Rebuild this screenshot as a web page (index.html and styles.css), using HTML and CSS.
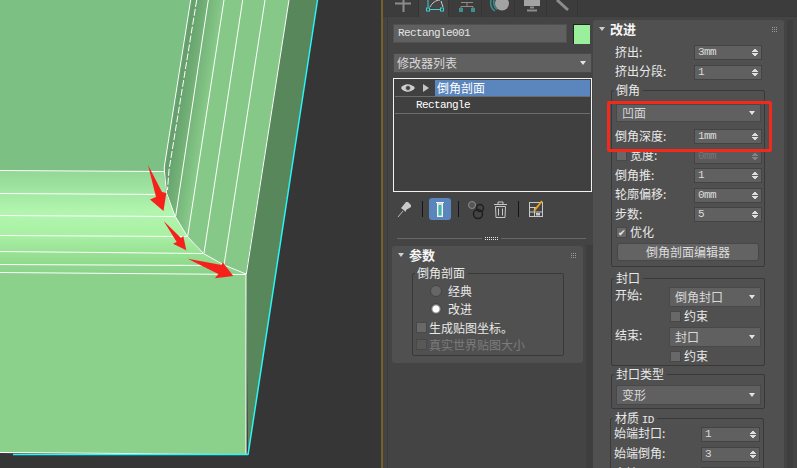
FILE: index.html
```html
<!DOCTYPE html>
<html lang="zh">
<head>
<meta charset="utf-8">
<title>倒角剖面</title>
<link rel="stylesheet" href="styles.css">
</head>
<body>
<svg class="view" width="381" height="468" viewBox="0 0 381 468">
  <defs>
    <linearGradient id="bands" gradientUnits="userSpaceOnUse" x1="0" y1="171" x2="0" y2="274">
      <stop offset="0" stop-color="#93d696"/>
      <stop offset=".22" stop-color="#a3e8a3"/>
      <stop offset=".4" stop-color="#b2f6ae"/>
      <stop offset=".62" stop-color="#a9f0a4"/>
      <stop offset=".82" stop-color="#96e092"/>
      <stop offset="1" stop-color="#8bd18b"/>
    </linearGradient>
    <linearGradient id="strip" gradientUnits="userSpaceOnUse" x1="168" y1="100" x2="206" y2="106">
      <stop offset="0" stop-color="#6fab74"/>
      <stop offset=".25" stop-color="#659f6b"/>
      <stop offset="1" stop-color="#85c887"/>
    </linearGradient>
  </defs>
  <rect width="381" height="468" fill="#363636"/>
  <polygon points="0,0 191,0 164,171 0,171" fill="#7dc084"/>
  <polygon points="191,0 289,0 246,274 224,265 203,253 187,236 175,216 166,193 164,171" fill="url(#strip)"/>
  <polygon points="289,0 317,0 248,455 246,274" fill="#57875a"/>
  <polygon points="0,171 164,171 166,193 175,216 187,236 203,253 224,265 246,274 0,274" fill="url(#bands)"/>
  <polygon points="0,273 246,274 246,454 0,453" fill="#8cd18b"/>
  <g class="edges">
    <path d="M190.7 0 164.3 167 164.5 172 166.5 193 175 216 187 236 203.5 253.5 224 265 246 274"/>
    <path d="M196.7 0 169 170 167.5 190" stroke-dasharray="7 2"/>
    <path d="M208.3 0 175.7 216"/>
    <path d="M224 0 187.7 236"/>
    <path d="M242.7 0 204 253"/>
    <path d="M265 0 224 265"/>
    <path d="M289 0 246.3 274"/>
    <path d="M0 170.5 164 171.5"/>
    <path d="M0 193.5 166 194.5"/>
    <path d="M0 215.5 175 216.5"/>
    <path d="M0 235.5 187 236.5"/>
    <path d="M0 251.5 203 253.5"/>
    <path d="M0 264.5 224 265.5"/>
    <path d="M0 272.5 246 274.5"/>
    <path d="M246 274V454"/>
    <path d="M0 452.5 246 454.5"/>
  </g>
  <path class="cyan" d="M317.5 0 248 455M13 454.5H248"/>
  <g class="arrows">
    <polygon points="148,165 162,192 166.3,193 163.5,211 150,199.5 156,197"/>
    <polygon points="163.7,221 181,238 183.3,236 186.3,250.3 173,243.7 176.7,242"/>
    <polygon points="187.7,258.7 221.7,265 222.7,262.3 233.3,276 215,278.3 218.3,274"/>
  </g>
</svg>
<div class="stripe"></div>
<main class="panel">
  <nav class="tabs">
    <div class="tab"><svg width="32" height="17"><path class="ic-grey" d="M16.500 0V12M8 3.500H24"/></svg></div>
    <div class="tab tab-active"><svg width="30" height="17"><path class="ic-cyan" d="M9 0V7.500M10.500 9.500H21.500"/><rect class="ic-cyan" x="7.500" y="8" width="3" height="3"/><rect class="ic-cyan" x="21.500" y="8" width="3" height="3"/><path class="ic-white" d="M11 7C13 3 17 0 21 0M22 1 24 7"/></svg></div>
    <div class="tab"><svg width="33" height="17"><path class="ic-thin" d="M12 2.500H24M18 2.500V6.500M12 8V6.500H24V8"/><rect class="ic-teal" x="10" y="8" width="4" height="4"/><rect class="ic-teal" x="22" y="8" width="4" height="4"/></svg></div>
    <div class="tab"><svg width="33" height="17"><circle class="fill-grey" cx="20" cy="3.500" r="7"/><path class="ic-arc" d="M9 0C8 5 10 9 13 11M12 0C11 4 13 8 15 9.500"/></svg></div>
    <div class="tab"><svg width="32" height="17"><rect class="fill-grey" x="9" y="0" width="16" height="6"/><path class="ic-grey" d="M15 7.500H19M12 10.500H22"/></svg></div>
    <div class="tab"><svg width="31" height="17"><path class="ic-wrench" d="M10 0 21 10"/></svg></div>
  </nav>
  <div class="cols">
    <section class="left">
      <div class="name-row">
        <div class="field name latin">Rectangle001</div>
        <div class="swatch"></div>
      </div>
      <div class="drop list-drop"><span>修改器列表</span><i class="caret"></i></div>
      <div class="stack">
        <div class="stack-row selected">
          <span class="stack-icons"><svg width="16" height="10" viewBox="0 0 16 10"><path class="eye" d="M1 5C4 0 11 0 15 5 11 10 4 10 1 5Z"/><circle class="pupil" cx="8" cy="5" r="2.500"/></svg><i class="play"></i></span>
          <span class="stack-name">倒角剖面</span>
        </div>
        <div class="stack-row"><span class="stack-name plain latin">Rectangle</span></div>
      </div>
      <div class="toolbar">
        <svg width="22" height="22"><path class="ic-pin" d="M5 19 10 13"/><path class="fill-light" d="M9 9 13 4 15 4 18 7 18 9 13 12 13 14 8 10Z"/></svg>
        <i class="sep"></i>
        <div class="tool-on"><svg width="22" height="22"><rect class="tube" x="8.500" y="4.500" width="5" height="14"/><rect class="tube-fill" x="9.500" y="7" width="3" height="10.500"/><path class="tube-top" d="M7 4.500H15"/></svg></div>
        <i class="sep"></i>
        <svg width="24" height="24"><circle class="ring-a" cx="7" cy="8" r="3.500"/><circle class="ring-b" cx="15" cy="11" r="3.500"/><circle class="ring-b" cx="13" cy="17" r="4.500"/></svg>
        <svg width="22" height="22"><path class="ic-can" d="M6.500 8.500H16.500L16 19.500H7ZM5 6.500H18M9 6V4H14V6M9.500 10.500V17.500M13.500 10.500V17.500"/></svg>
        <i class="sep"></i>
        <svg width="22" height="22"><rect class="ic-can" x="4.500" y="4.500" width="13" height="14"/><path class="ic-can" d="M4.500 9.500H12M4.500 14H17M9.500 9.500V18.500"/><rect class="fill-light" x="11" y="15" width="4" height="2.500"/><path class="pencil" d="M9 13 17 3"/></svg>
      </div>
      <div class="divider"><i></i><b></b><i></i></div>
      <div class="card params">
        <div class="card-title"><i class="caret title-caret"></i><strong>参数</strong><svg class="grip" width="5" height="5"><path d="M0 .500H5M0 2.500H5M0 4.500H5"/></svg></div>
        <fieldset class="group params-group">
          <legend>倒角剖面</legend>
          <label class="radio-row"><i class="radio"></i>经典</label>
          <label class="radio-row"><i class="radio on"></i>改进</label>
          <label class="check-row"><i class="check"></i>生成贴图坐标。</label>
          <label class="check-row off"><i class="check"></i>真实世界贴图大小</label>
        </fieldset>
      </div>
    </section>
    <section class="card right">
      <div class="card-title"><i class="caret title-caret"></i><strong>改进</strong><svg class="grip" width="5" height="5"><path d="M0 .500H5M0 2.500H5M0 4.500H5"/></svg></div>
      <div class="loose">
        <div class="row"><span class="lbl">挤出:</span><div class="spin latin">3mm<i class="arrows-ud"></i></div></div>
        <div class="row"><span class="lbl">挤出分段:</span><div class="spin latin">1<i class="arrows-ud"></i></div></div>
      </div>
      <fieldset class="group bevel">
        <legend>倒角</legend>
        <div class="drop"><span>凹面</span><i class="caret"></i></div>
        <div class="rows">
          <div class="row"><span class="lbl">倒角深度:</span><div class="spin latin">1mm<i class="arrows-ud"></i></div></div>
          <div class="row"><label class="lbl check-inline"><i class="check"></i>宽度:</label><div class="spin latin dim">0mm<i class="arrows-ud"></i></div></div>
          <div class="row"><span class="lbl">倒角推:</span><div class="spin latin">1<i class="arrows-ud"></i></div></div>
          <div class="row"><span class="lbl">轮廓偏移:</span><div class="spin latin">0mm<i class="arrows-ud"></i></div></div>
          <div class="row"><span class="lbl">步数:</span><div class="spin latin">5<i class="arrows-ud"></i></div></div>
        </div>
        <label class="opt"><i class="check ticked">✔</i>优化</label>
        <button class="btn" type="button">倒角剖面编辑器</button>
      </fieldset>
      <fieldset class="group cap">
        <legend>封口</legend>
        <div class="cap-row"><span class="lbl">开始:</span><div class="drop small"><span>倒角封口</span><i class="caret"></i></div></div>
        <label class="sub-check"><i class="check"></i>约束</label>
        <div class="cap-row"><span class="lbl">结束:</span><div class="drop small"><span>封口</span><i class="caret"></i></div></div>
        <label class="sub-check"><i class="check"></i>约束</label>
      </fieldset>
      <fieldset class="group cap-type">
        <legend>封口类型</legend>
        <div class="drop wide"><span>变形</span><i class="caret"></i></div>
      </fieldset>
      <fieldset class="group material">
        <legend>材质 <span class="latin">ID</span></legend>
        <div class="row"><span class="lbl">始端封口:</span><div class="spin short latin">1<i class="arrows-ud"></i></div></div>
        <div class="row"><span class="lbl">始端倒角:</span><div class="spin short latin">3<i class="arrows-ud"></i></div></div>
        <div class="row"><span class="lbl">末端:</span><div class="spin short latin">4<i class="arrows-ud"></i></div></div>
      </fieldset>
      <div class="callout"></div>
    </section>
    <div class="scroll"></div>
  </div>
</main>
</body>
</html>
```
FILE: styles.css
```css
* { box-sizing: border-box; }
html, body { height: 100%; }
body {
  margin: 0;
  width: 797px;
  height: 468px;
  overflow: hidden;
  display: flex;
  background: #363636;
  color: #e9e9e9;
  font: 12px/14px "Noto Sans CJK SC", sans-serif;
}
i { font-style: normal; display: block; }
.view { flex: none; display: block; }
.edges path { fill: none; stroke: #fff; stroke-width: 1; }
.cyan { fill: none; stroke: #2cf5f5; stroke-width: 1.5; }
.arrows polygon { fill: #f5211a; }
.stripe { flex: none; width: 2px; background: #76602a; }

.panel { flex: 1; min-width: 0; display: flex; flex-direction: column; background: #444; }
.tabs {
  flex: none;
  height: 17px;
  padding-left: 4px;
  display: grid;
  grid-template-columns: 32px 30px 33px 33px 32px 31px 1fr;
  background: #3c3c3c;
  border-bottom: 1px solid #3a3a3a;
}
.tab { height: 17px; border-right: 1px solid #353535; overflow: hidden; }
.tab svg { display: block; }
.tab-active { background: #444; }
.ic-grey { fill: none; stroke: #8c8c8c; stroke-width: 2; }
.ic-cyan { fill: none; stroke: #3cd0d0; stroke-width: 1; }
.ic-white { fill: none; stroke: #cfcfcf; stroke-width: 1; }
.ic-thin { fill: none; stroke: #8c8c8c; stroke-width: 1; }
.ic-teal { fill: #3d9090; }
.ic-arc { fill: none; stroke: #3d8f8f; stroke-width: 1.5; }
.ic-wrench { fill: none; stroke: #8c8c8c; stroke-width: 3; }
.fill-grey { fill: #a3a3a3; }
.fill-light { fill: #c8c8c8; }

.latin { font-family: "Liberation Mono", "Noto Sans CJK SC", monospace; font-size: 11px; letter-spacing: -.6px; }
.cols { flex: 1; min-height: 0; display: flex; overflow: hidden; }

.left {
  flex: none;
  width: 206px;
  margin-left: 4px;
  padding: 7px 0 0 5px;
  border-left: 1px solid #3b3b3b;
  background: linear-gradient(#3e3e3e, #3e3e3e) right 0 top 228px / 7px 100% no-repeat;
}
.name-row { display: flex; gap: 6px; width: 197px; }
.field { background: #606060; border: 1px solid #505050; }
.name { width: 174px; height: 19px; line-height: 17px; padding-left: 4px; color: #e4e4e4; }
.swatch { width: 17px; height: 20px; background: #9af09a; border: 1px solid #222; border-width: 1px 0 0 1px; }

.drop {
  display: flex;
  align-items: center;
  justify-content: space-between;
  height: 18px;
  padding: 0 5px;
  background: #606060;
  border: 1px solid #484848;
  color: #d8d8d8;
}
.list-drop { width: 199px; height: 20px; margin-top: 9px; padding: 0 3px; }
.list-drop .caret { margin-right: 2px; }
.caret {
  flex: none;
  width: 0;
  height: 0;
  border: 3px solid transparent;
  border-top: 4px solid #e4e4e4;
  border-bottom: 0;
  border-left-width: 3px;
}
.stack {
  width: 199px;
  height: 114px;
  margin-top: 5px;
  padding: 1px;
  background: #404040;
  border: 1px solid #f2f2f2;
}
.stack-row { display: flex; height: 17px; line-height: 15px; border-bottom: 1px solid #6c6c6c; }
.stack-icons { flex: none; width: 40px; display: flex; align-items: center; padding-left: 5px; gap: 7px; }
.stack-name { flex: 1; padding-left: 2px; color: #fff; }
.stack-name.plain { padding-left: 21px; line-height: 17px; }
.selected .stack-name { background: #5b86bd; font-size: 12px; }
.eye { fill: #d0d0d0; }
.pupil { fill: #404040; stroke: #d0d0d0; stroke-width: .7; }
.play { width: 0; height: 0; border: 4px solid transparent; border-left: 6px solid #c4c4c4; border-right: 0; }

.toolbar {
  height: 34px;
  display: grid;
  grid-template-columns: 22px 14px 22px 14px 24px 22px 14px 22px;
  align-items: center;
  width: 154px;
}
.toolbar svg { display: block; }
.sep { width: 1px; height: 16px; background: #161616; justify-self: center; }
.tool-on { width: 22px; height: 22px; border-radius: 3px; background: #5b86bd; }
.tube { fill: #dcdcdc; stroke: #f2f2f2; stroke-width: 1; }
.tube-fill { fill: #3fb7aa; }
.tube-top { fill: none; stroke: #f2f2f2; stroke-width: 1; }
.ic-pin { fill: none; stroke: #bdbdbd; stroke-width: 1; }
.ic-can { fill: none; stroke: #c8c8c8; stroke-width: 1; }
.pencil { fill: none; stroke: #f0a020; stroke-width: 2; }
.ring-a { fill: #555; stroke: #8c8c8c; }
.ring-b { fill: none; stroke: #1f1f1f; stroke-width: 1.5; }

.divider { display: flex; align-items: center; gap: 3px; height: 5px; margin: 10px 0 5px 4px; width: 189px; }
.divider i { flex: 1; height: 1px; background: #686868; }
.divider b { flex: none; width: 13px; height: 3px; border-top: 1px dotted #e6e6e6; border-bottom: 1px dotted #e6e6e6; }

.card { background: #505050; border-radius: 3px; position: relative; }
.card-title { display: flex; align-items: center; height: 18px; padding: 0 7px 0 6px; }
.card-title strong { flex: 1; margin-left: 5px; color: #f6f6f6; font-size: 13px; font-weight: 700; }
.title-caret { border-top-color: #cfcfcf; }
.grip { flex: none; }
.grip path { fill: none; stroke: #9a9a9a; stroke-width: 1; stroke-dasharray: 1 1; }

.group { margin: 0; min-width: 0; padding: 0 3px 5px 4px; border: 1px solid #393939; border-radius: 2px; }
.group legend { margin-left: -2px; padding: 0 3px 0 2px; height: 14px; line-height: 14px; }

.params { width: 191px; height: 117px; margin-left: -1px; }
.params-group { width: 152px; height: 90px; margin: 2px 0 0 20px; padding-top: 2px; }
.radio-row { display: flex; align-items: center; gap: 6px; height: 18px; padding-left: 13px; }
.radio { width: 12px; height: 12px; border-radius: 50%; background: #666; border: 1px solid #454545; }
.radio.on { background: radial-gradient(circle, #fff 0 3px, #8a8a8a 4px, #666 5px); }
.check-row { display: flex; align-items: center; gap: 2px; height: 17px; margin-left: -1px; }
.radio-row + .check-row { margin-top: 1px; }
.check { flex: none; width: 11px; height: 11px; background: #686868; border: 1px solid #484848; }
.off { color: #7c7c7c; }
.off .check { background: #585858; }

.right { flex: none; width: 191px; height: 460px; margin-top: 3px; }
.loose { padding: 7px 22px 0 22px; }
.loose .row { margin-left: 0; margin-right: 0; }
.row { display: flex; align-items: center; justify-content: space-between; height: 15px; margin: 0 -1px 4.500px -1px; }
.lbl { flex: none; margin-bottom: 2px; }
.spin {
  position: relative;
  flex: none;
  width: 68px;
  height: 15px;
  line-height: 13px;
  padding-left: 3px;
  background: #606060;
  border: 1px solid #434343;
  color: #dcdcdc;
}
.spin.short { width: 59px; }
.spin.dim { color: #777; background: #5a5a5a; }
.arrows-ud {
  position: absolute;
  right: 3px;
  top: 2px;
  width: 6px;
  height: 9px;
  background:
    linear-gradient(to top left, #ddd 50%, transparent 50%) 0 0 / 3px 4px no-repeat,
    linear-gradient(to top right, #ddd 50%, transparent 50%) 3px 0 / 3px 4px no-repeat,
    linear-gradient(to bottom left, #ddd 50%, transparent 50%) 0 5px / 3px 4px no-repeat,
    linear-gradient(to bottom right, #ddd 50%, transparent 50%) 3px 5px / 3px 4px no-repeat;
}
.dim .arrows-ud { opacity: .3; }

.bevel { width: 154px; margin: -1px 0 0 18px; padding-bottom: 5px; }
.bevel .drop { margin-top: 7px; }
.rows { margin-top: 7px; }
.rows .row:last-child { margin-bottom: 3px; }
.check-inline { display: flex; align-items: center; gap: 3px; padding-left: 1px; }
.opt { display: flex; align-items: center; gap: 3px; height: 14px; margin-bottom: 4px; }
.ticked { color: #e8e8e8; font-size: 9px; line-height: 9px; text-align: center; }
.btn {
  display: block;
  width: 142px;
  height: 18px;
  margin: 0 0 0 1px;
  padding: 0;
  background: #636363;
  border: 1px solid #484848;
  border-radius: 3px;
  color: #dedede;
  font: inherit;
}
.cap { width: 154px; margin: 4px 0 0 18px; padding-bottom: 0; }
.cap-row { display: flex; justify-content: space-between; margin: 2px 0 0 -1px; }
.cap-row .lbl { margin-top: 1px; }
.small { width: 92px; height: 20px; }
.sub-check { display: flex; align-items: center; gap: 3px; height: 18px; padding-left: 54px; }
.cap-type { width: 154px; margin: 1px 0 0 18px; padding-bottom: 3px; }
.wide { height: 20px; margin-top: 4px; }
.material { width: 154px; margin: 2px 0 0 17px; }
.material .row { margin-top: 0; margin-right: 0; margin-bottom: 5px; }
.material .row:first-of-type { margin-top: 2px; }
.material .lbl { margin-bottom: 4px; }

.callout {
  position: absolute;
  left: 14px;
  top: 81px;
  width: 165px;
  height: 51px;
  border: 3px solid #f2291b;
  border-radius: 2px;
  pointer-events: none;
}
.scroll { flex: none; width: 6px; margin: 3px 0 0 3px; background: #3e3e3e; }
```
